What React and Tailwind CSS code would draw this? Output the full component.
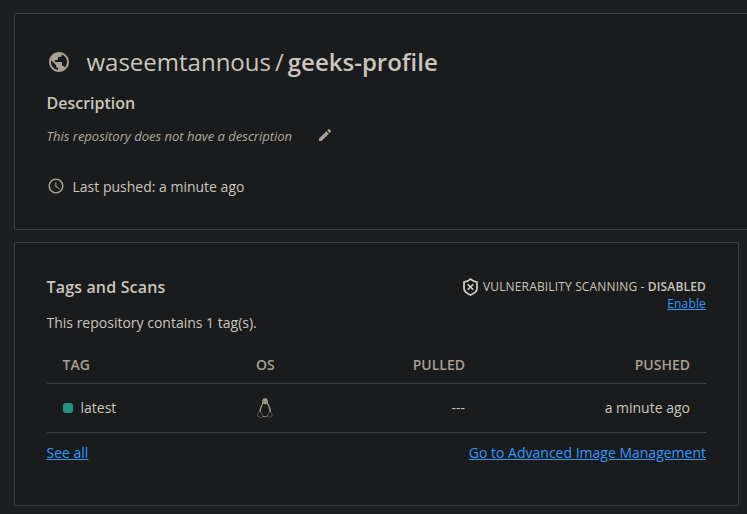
import React from 'react';

function GlobeIcon() {
  return (
    <svg viewBox="0 0 24 24" className="size-6 shrink-0 fill-[#a89f93]">
      <path d="M12 2C6.480 2 2 6.480 2 12s4.480 10 10 10 10-4.480 10-10S17.520 2 12 2zm-1 17.930c-3.950-.490-7-3.850-7-7.930 0-.620.080-1.210.210-1.790L9 15v1c0 1.100.900 2 2 2v1.930zm6.900-2.540c-.260-.810-1-1.390-1.900-1.390h-1v-3c0-.550-.450-1-1-1H8v-2h2c.550 0 1-.450 1-1V7h2c1.100 0 2-.900 2-2v-.410c2.930 1.190 5 4.060 5 7.410 0 2.080-.800 3.970-2.100 5.390z" />
    </svg>
  );
}

function PencilIcon() {
  return (
    <svg viewBox="0 0 24 24" className="size-4 shrink-0 fill-[#a89f93]">
      <path d="M3 17.250V21h3.750L17.810 9.940l-3.750-3.750L3 17.250zM20.710 7.040a1 1 0 0 0 0-1.410l-2.340-2.340a1 1 0 0 0-1.410 0l-1.830 1.830 3.750 3.750 1.830-1.830z" />
    </svg>
  );
}

function ClockIcon() {
  return (
    <svg viewBox="0 0 24 24" className="mb-[2px] size-[18px] shrink-0 fill-[#a89f93]">
      <path d="M11.990 2C6.470 2 2 6.480 2 12s4.470 10 9.990 10C17.520 22 22 17.520 22 12S17.520 2 11.990 2zM12 20c-4.420 0-8-3.580-8-8s3.580-8 8-8 8 3.580 8 8-3.580 8-8 8z" />
      <path d="M12.500 7H11v6l5.250 3.150.750-1.230-4.500-2.670z" />
    </svg>
  );
}

function ShieldOffIcon() {
  return (
    <svg viewBox="0 0 15 18" className="h-[18px] w-[15px] shrink-0 fill-none stroke-[#d3cec6]">
      <path strokeWidth="1.700" d="M7.500 1.100C5.900 2.500 4 3.500 1 4.200v6.300c0 3 2.700 5 6.500 6.500 3.800-1.500 6.500-3.500 6.500-6.500V4.200C11 3.500 9.100 2.500 7.500 1.100z" />
      <path strokeWidth="1.600" d="M4.700 6.200l5.600 5.600M10.300 6.200l-5.600 5.600" />
    </svg>
  );
}

function LinuxIcon() {
  return (
    <svg viewBox="0 0 16 20" className="ml-px h-5 w-4 fill-none">
      <path fill="#a89f93" d="M5.300 3.300C5.300 1.300 6.300.200 8 .200s2.800 1.200 2.800 3.200c0 1.300.200 2 .900 3.100 1.400 2.200 2.400 4.600 2.300 7.200l-1.500.8c.1-3-.6-5-2-7.700L9.400 5.200 8 6 6.600 5.200 5.500 7.300c-1.300 2.500-1.900 4.200-1.700 6.500l-1.500-.1c.1-2.600.8-4.500 2.200-6.700.8-1.300.8-2.200.8-3.700z" />
      <path fill="#a89f93" d="M5.800 2.500h4.400v2.700L8 6.300 5.800 5.200z" />
      <path fill="#1b1c1d" d="M6.400 3.200h.8v.9h-.8zM8.500 3.200h.9v.9h-.9z" />
      <path stroke="#69645d" strokeWidth=".8" d="M2.400 14.200c-.4.900-1.900.8-1.900 1.500 0 .8.400 1.300.1 2.200-.1.800 1.900.8 3.300 1.500 1.300.5 2.400-.3 2-1.700-.7-1.300-1.600-2.500-2.400-3.600-.4-.4-.8-.4-1.100.1zM12 14.400c-.9.500-1 1.700-1.200 3.300-.1 1.500 1.100 2.100 2.200 1.300.8-.8 2.500-1.100 2.500-1.800 0-.6-1-.9-1.100-1.600-.1-1.200-1.600-1.400-2.400-1.200z" />
      <path stroke="#a89f93" strokeWidth=".9" d="M6 18.300c1.500.7 3.300.5 4.700-.5" />
    </svg>
  );
}

export default function App() {
  return (
    <div className="flex h-[514px] w-[747px] flex-col gap-3 overflow-hidden bg-[#1e1f21] pt-[13px] pl-[14px] font-['Open_Sans','Noto_Sans',sans-serif] text-sm text-[#cbc6bd]">
      <section className="flex h-[217px] w-[760px] shrink-0 flex-col rounded-[2px] border border-[#3c3e40] bg-[#1a1b1c] pt-[30px] pl-[31.5px]">
        <div className="flex h-9 items-center">
          <GlobeIcon />
          <h1 className="ml-4 flex items-center text-2xl whitespace-nowrap">
            <span>waseemtannous</span>
            <span className="mx-1">/</span>
            <span className="font-semibold">geeks-profile</span>
          </h1>
        </div>
        <h2 className="mt-[11px] h-6 text-base leading-6 font-semibold">Description</h2>
        <div className="mt-[11px] flex h-5 items-center gap-[25px]">
          <p className="text-[13px] text-[#b0a99e] italic">This repository does not have a description</p>
          <div className="-mt-[3px]">
            <PencilIcon />
          </div>
        </div>
        <div className="mt-[31px] flex h-5 items-center gap-2">
          <ClockIcon />
          <span>Last pushed: a minute ago</span>
        </div>
      </section>

      <section className="flex h-[264px] w-[725px] shrink-0 flex-col rounded-[2px] border border-[#3c3e40] bg-[#1a1b1c] pt-8 pr-8 pl-[31.5px]">
        <div className="flex h-9 justify-between">
          <h2 className="h-6 text-base leading-6 font-semibold tracking-[0.16px]">Tags and Scans</h2>
          <div className="flex flex-col items-end text-xs">
            <div className="flex h-6 items-center gap-[5px]">
              <ShieldOffIcon />
              <span className="tracking-[0.155px]">VULNERABILITY SCANNING - <span className="font-semibold">DISABLED</span></span>
            </div>
            <a className="-mt-[2px] leading-[14px] tracking-[0.15px] text-[#3399ff] underline">Enable</a>
          </div>
        </div>
        <p className="mt-[2px] h-5 leading-5">This repository contains 1 tag(s).</p>
        <table className="mt-[14px] w-full table-fixed border-collapse">
          <colgroup>
            <col className="w-[193.5px]" />
            <col className="w-[82px]" />
            <col className="w-[159px]" />
            <col />
          </colgroup>
          <thead>
            <tr className="h-9 border-b border-[#3c3e40] text-[#a89f93]">
              <th className="pl-4 text-left font-semibold">TAG</th>
              <th className="pl-4 text-left font-semibold">OS</th>
              <th className="pr-4 text-right font-semibold">PULLED</th>
              <th className="pr-4 text-right font-semibold">PUSHED</th>
            </tr>
          </thead>
          <tbody>
            <tr className="h-[49px] border-b border-[#3c3e40]">
              <td className="pl-4">
                <div className="flex items-center gap-2">
                  <span className="size-[10px] rounded-[3px] bg-[#27927c]" />
                  <span>latest</span>
                </div>
              </td>
              <td className="pl-4"><LinuxIcon /></td>
              <td className="pr-4 text-right">---</td>
              <td className="pr-4 text-right">a minute ago</td>
            </tr>
          </tbody>
        </table>
        <div className="mt-[10px] flex justify-between leading-5 text-[#3399ff]">
          <a className="underline">See all</a>
          <a className="underline">Go to Advanced Image Management</a>
        </div>
      </section>
    </div>
  );
}
